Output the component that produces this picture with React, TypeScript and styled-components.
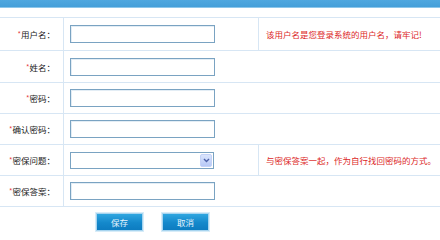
import React from "react"
import styled, { createGlobalStyle } from "styled-components"

const GlobalStyle = createGlobalStyle`
  html, body {
    margin: 0;
    padding: 0;
    background: #fff;
  }
  body {
    font-family: "Noto Sans CJK SC", "Liberation Sans", sans-serif;
    font-size: 8.5px;
    color: #222;
  }
`

const Page = styled.div`
  width: 440px;
  height: 239px;
  overflow: hidden;
`

const TopBar = styled.div`
  height: 7px;
  background: linear-gradient(#4fa7df, #459fd9);
  border-bottom: 1px solid #8cc6ea;
  margin-bottom: 9px;
`

const FormTable = styled.table`
  width: 440px;
  border-collapse: collapse;
  table-layout: fixed;
  border-top: 1px solid #d7e6f4;
`

const Row = styled.tr<{ $h: number }>`
  height: ${({ $h }) => $h}px;

  > td {
    padding: 0;
    vertical-align: middle;
    border-bottom: 1px solid #d7e6f4;
  }
`

const LabelCell = styled.td`
  width: 55px;
  padding-right: 8px !important;
  text-align: right;
  white-space: nowrap;
  border-right: 1px solid #d7e6f4;
`

const Star = styled.span`
  color: #e63a3f;
  font-size: 7.5px;
  vertical-align: 1px;
`

const FieldCell = styled.td`
  width: 188px;
  padding-left: 6px !important;
`

const HintCell = styled.td`
  padding-left: 7px !important;
  color: #dc1f27;
  white-space: nowrap;
  border-left: 1px solid #d7e6f4;
`

const TextInput = styled.input`
  display: block;
  box-sizing: border-box;
  width: 145px;
  height: 18px;
  margin: 0;
  border: 1px solid #7aa3c2;
  box-shadow: inset 1px 1px 0 #e3edf5;
  background: #fff;
  outline: none;
`

const SelectBox = styled.div`
  box-sizing: border-box;
  width: 144px;
  height: 17px;
  border: 1px solid #7aa3c2;
  background: #fff;
  display: flex;
  justify-content: flex-end;
  align-items: center;
  padding-right: 1px;
`

const DropButton = styled.div`
  width: 12px;
  height: 13px;
  border-radius: 2px;
  background: linear-gradient(#dbe5fd, #b6c8f6);
  border: 1px solid #c4d2f7;
  box-sizing: border-box;
  display: flex;
  align-items: center;
  justify-content: center;
`

const ButtonRow = styled.td`
  padding: 6px 0 0 96px !important;
  vertical-align: top !important;
  border-bottom: none !important;
`

const ButtonBar = styled.div`
  display: flex;
  gap: 19px;
`

const BlueButton = styled.button`
  box-sizing: border-box;
  width: 47px;
  height: 18px;
  padding: 0;
  border: 1px solid #a7d4ef;
  outline: 1px solid #d7ecf8;
  background: linear-gradient(#2fa6e0, #1488cb 55%, #0d7cc0);
  color: #e6f4fd;
  font-family: "Noto Sans CJK SC", sans-serif;
  font-size: 8.5px;
  cursor: pointer;
`

type Field = {
  label: string
  h: number
  hint?: string
  select?: boolean
}

const fields: Field[] = [
  { label: "用户名：", h: 33, hint: "该用户名是您登录系统的用户名，请牢记!" },
  { label: "姓名：", h: 32 },
  { label: "密码：", h: 31 },
  { label: "确认密码：", h: 31 },
  { label: "密保问题：", h: 31, hint: "与密保答案一起，作为自行找回密码的方式。", select: true },
  { label: "密保答案：", h: 31 },
]

export default function App() {
  return (
    <Page>
      <GlobalStyle />
      <TopBar />
      <FormTable>
        <tbody>
          {fields.map((f) => (
            <Row key={f.label} $h={f.h}>
              <LabelCell>
                <Star>*</Star>
                {f.label}
              </LabelCell>
              <FieldCell colSpan={f.hint ? 1 : 2}>
                {f.select ? (
                  <SelectBox>
                    <DropButton>
                      <svg width="7" height="5" viewBox="0 0 7 5">
                        <path d="M1 1 L3.5 3.5 L6 1" fill="none" stroke="#4d61a8" strokeWidth="1.4" />
                      </svg>
                    </DropButton>
                  </SelectBox>
                ) : (
                  <TextInput type={f.label.includes("密码") ? "password" : "text"} />
                )}
              </FieldCell>
              {f.hint && <HintCell>{f.hint}</HintCell>}
            </Row>
          ))}
          <Row $h={33}>
            <ButtonRow colSpan={3}>
              <ButtonBar>
                <BlueButton>保存</BlueButton>
                <BlueButton>取消</BlueButton>
              </ButtonBar>
            </ButtonRow>
          </Row>
        </tbody>
      </FormTable>
    </Page>
  )
}
